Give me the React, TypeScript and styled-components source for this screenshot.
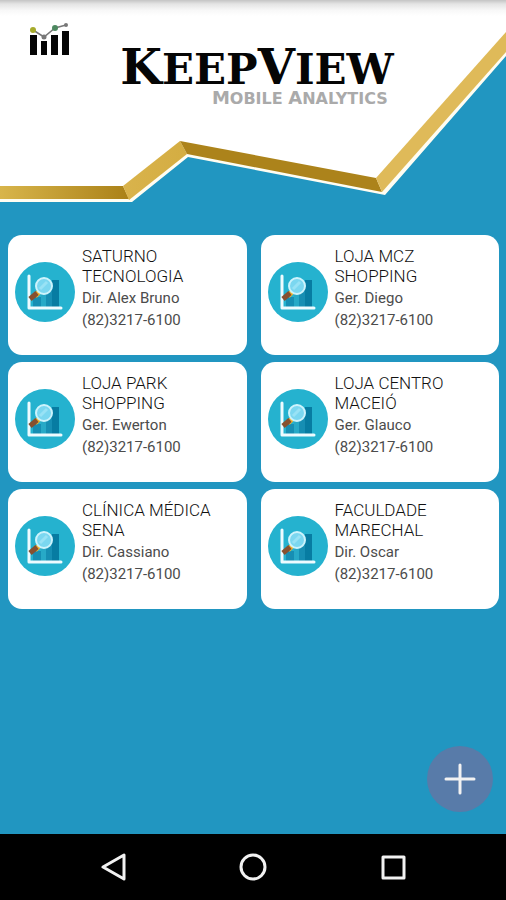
import React from "react";
import styled, { createGlobalStyle } from "styled-components";

const GlobalStyle = createGlobalStyle`
  *, *::before, *::after { box-sizing: border-box; }
  body { margin: 0; background: #2196c1; font-family: Roboto, "Liberation Sans", sans-serif; }
  h1, h2, p, ul { margin: 0; padding: 0; }
`;

const Screen = styled.div`
  display: flex;
  flex-direction: column;
  min-height: 100vh;
  background: #2196c1;
`;

const Header = styled.header`
  display: grid;
  grid-template-columns: 100%;
  height: 204px;

  & > * { grid-area: 1 / 1; }
`;

const Ribbon = styled.svg`
  display: block;
  width: 100%;
  height: 204px;
`;

const Shade = styled.div`
  height: 16px;
  background: linear-gradient(#c4c4c4, #e4e4e4 25%, #f8f8f8 65%, #ffffff00);
`;

const Brand = styled.div`
  display: grid;
  grid-template-columns: 80px 1fr 72px;
  align-items: start;
  padding-top: 20px;
`;

const BrandIcon = styled.svg`
  width: 52px;
  height: 40px;
  justify-self: end;
`;

const BrandText = styled.div`
  justify-self: center;
  display: flex;
  flex-direction: column;
  align-items: flex-end;
  padding-top: 29px;
  font-family: "DejaVu Serif", serif;
  white-space: nowrap;
`;

const Name = styled.h1`
  color: #050505;
  font-size: 42px;
  font-weight: 700;
  line-height: 42px;
`;

const Initial = styled.span<{ $size: number }>`
  font-size: ${(p) => p.$size}px;
  line-height: 1px;
`;

const Tagline = styled.p`
  padding-right: 6px;
  color: #aaaaaa;
  font-family: "DejaVu Sans", sans-serif;
  font-size: 16px;
  font-weight: 700;
  line-height: 16px;
`;

const Main = styled.main`
  flex: 1;
  display: flex;
  flex-direction: column;
  padding: 31px 7px 22px 8px;
`;

const CardGrid = styled.ul`
  display: grid;
  grid-template-columns: 1fr 1fr;
  gap: 7px 14px;
  list-style: none;
`;

const Card = styled.li`
  display: flex;
  align-items: flex-start;
  gap: 7px;
  min-height: 120px;
  padding: 11px 7px;
  border-radius: 14px;
  background: #fff;
`;

const CardIcon = styled.svg`
  flex: none;
  width: 60px;
  height: 60px;
  margin-top: 16px;
`;

const CardText = styled.div`
  min-width: 0;
  color: #111;
`;

const CardTitle = styled.h2`
  max-width: 140px;
  font-size: 17px;
  font-weight: 300;
  line-height: 20px;
`;

const CardLine = styled.p`
  padding-top: 2px;
  color: #4c4c4c;
  font-size: 15px;
  font-weight: 400;
  line-height: 20px;
`;

const AddButton = styled.button`
  display: grid;
  place-items: center;
  align-self: flex-end;
  width: 66px;
  height: 66px;
  margin: auto 6px 0 0;
  padding: 0;
  border: 0;
  border-radius: 50%;
  background: #587ba9;
`;

const NavBar = styled.nav`
  display: grid;
  grid-template-columns: repeat(3, 140px);
  justify-content: center;
  height: 66px;
  background: #000;
`;

const NavButton = styled.button`
  display: grid;
  place-items: center;
  padding: 0;
  border: 0;
  background: none;
`;

const Glyph = styled.svg`
  display: block;
  fill: none;
  stroke: #f2f2f2;
`;

const companies = [
  { lines: ["SATURNO", "TECNOLOGIA"], contact: "Dir. Alex Bruno" },
  { lines: ["LOJA MCZ", "SHOPPING"], contact: "Ger. Diego" },
  { lines: ["LOJA PARK", "SHOPPING"], contact: "Ger. Ewerton" },
  { lines: ["LOJA CENTRO", "MACEIÓ"], contact: "Ger. Glauco" },
  { lines: ["CLÍNICA MÉDICA", "SENA"], contact: "Dir. Cassiano" },
  { lines: ["FACULDADE", "MARECHAL"], contact: "Dir. Oscar" },
];
const phone = "(82)3217-6100";

function HeaderRibbon() {
  return (
    <Ribbon viewBox="0 0 506 204" preserveAspectRatio="none" aria-hidden="true">
      <defs>
        <linearGradient id="flatGold">
          <stop offset="0" stopColor="#d8b54b" />
          <stop offset="1" stopColor="#aa8118" />
        </linearGradient>
        <linearGradient id="riseGold">
          <stop offset="0" stopColor="#d9b34c" />
          <stop offset="1" stopColor="#d4ad42" />
        </linearGradient>
      </defs>
      <path d="M0 0H506V56L385 195L188 157L132 202H0Z" fill="#fffdf2" />
      <path d="M0 0H506V32L376 178L180 141L123 186H0Z" fill="#fff" />
      <path d="M0 186H123L129 199H0Z" fill="url(#flatGold)" />
      <path d="M123 186L180 141L187 154L129 200Z" fill="url(#riseGold)" />
      <path d="M180 141L376 178L382 192L187 154Z" fill="#ac831b" />
      <path d="M376 178L506 32V52L382 192Z" fill="#dfba59" />
    </Ribbon>
  );
}

function ReportIcon() {
  return (
    <CardIcon viewBox="0 0 60 60" aria-hidden="true">
      <circle cx="30" cy="30" r="30" fill="#25b2cf" />
      <path d="M18 35h8v10h-8z" fill="#168eb3" />
      <path d="M26 31h6v14h-6z" fill="#27a9c7" />
      <path d="M31 24h6v21h-6z" fill="#168eb3" />
      <path d="M37 18h7v27h-7z" fill="#077ca2" />
      <path d="M14 14v32h32" fill="none" stroke="#eefbff" strokeWidth="3" strokeLinecap="round" strokeLinejoin="round" />
      <path d="M24 30l-4 4" stroke="#f4b52e" strokeWidth="5" />
      <path d="M22 31l-7 6" stroke="#87502f" strokeWidth="5" />
      <circle cx="29" cy="24" r="8" fill="#7bd7f0" stroke="#cdf3fc" strokeWidth="2" />
      <path d="M25 27l7-7" stroke="#98e2f5" strokeWidth="3" />
    </CardIcon>
  );
}

export default function App() {
  return (
    <>
      <GlobalStyle />
      <Screen>
        <Header>
          <HeaderRibbon />
          <Shade />
          <Brand>
            <BrandIcon viewBox="0 0 52 40" aria-hidden="true">
              <path d="M2 15h7v20h-7zM13 21h6v14h-6zM23 15h7v20h-7zM34 11h7v24h-7z" fill="#050505" />
              <path d="M5 10L16 17L27 8L38 5" fill="none" stroke="#777" strokeWidth="1.500" />
              <circle cx="5" cy="10" r="3" fill="#a6ab2b" />
              <circle cx="16" cy="17" r="2.500" fill="#777" />
              <circle cx="27" cy="8" r="3" fill="#4d8860" />
              <circle cx="38" cy="5" r="2" fill="#777" />
            </BrandIcon>
            <BrandText>
              <Name>
                <Initial $size={48}>K</Initial>EEP<Initial $size={48}>V</Initial>IEW
              </Name>
              <Tagline>
                <Initial $size={18}>M</Initial>OBILE <Initial $size={18}>A</Initial>NALYTICS
              </Tagline>
            </BrandText>
          </Brand>
        </Header>
        <Main>
          <CardGrid>
            {companies.map(({ lines, contact }) => (
              <Card key={lines.join(" ")}>
                <ReportIcon />
                <CardText>
                  <CardTitle>
                    {lines[0]}
                    <br />
                    {lines[1]}
                  </CardTitle>
                  <CardLine>{contact}</CardLine>
                  <CardLine>{phone}</CardLine>
                </CardText>
              </Card>
            ))}
          </CardGrid>
          <AddButton type="button" aria-label="Adicionar">
            <Glyph width="32" height="32" viewBox="0 0 32 32" strokeWidth="3" strokeLinecap="round">
              <path d="M16 2v28M2 16h28" />
            </Glyph>
          </AddButton>
        </Main>
        <NavBar>
          <NavButton type="button" aria-label="Voltar">
            <Glyph width="28" height="28" viewBox="0 0 28 28" strokeWidth="3" strokeLinejoin="round">
              <path d="M4 14L25 2V26Z" />
            </Glyph>
          </NavButton>
          <NavButton type="button" aria-label="Início">
            <Glyph width="28" height="28" viewBox="0 0 28 28" strokeWidth="3">
              <circle cx="14" cy="14" r="12" />
            </Glyph>
          </NavButton>
          <NavButton type="button" aria-label="Recentes">
            <Glyph width="28" height="28" viewBox="0 0 28 28" strokeWidth="3" strokeLinejoin="round">
              <rect x="4" y="4" width="21" height="21" />
            </Glyph>
          </NavButton>
        </NavBar>
      </Screen>
    </>
  );
}
